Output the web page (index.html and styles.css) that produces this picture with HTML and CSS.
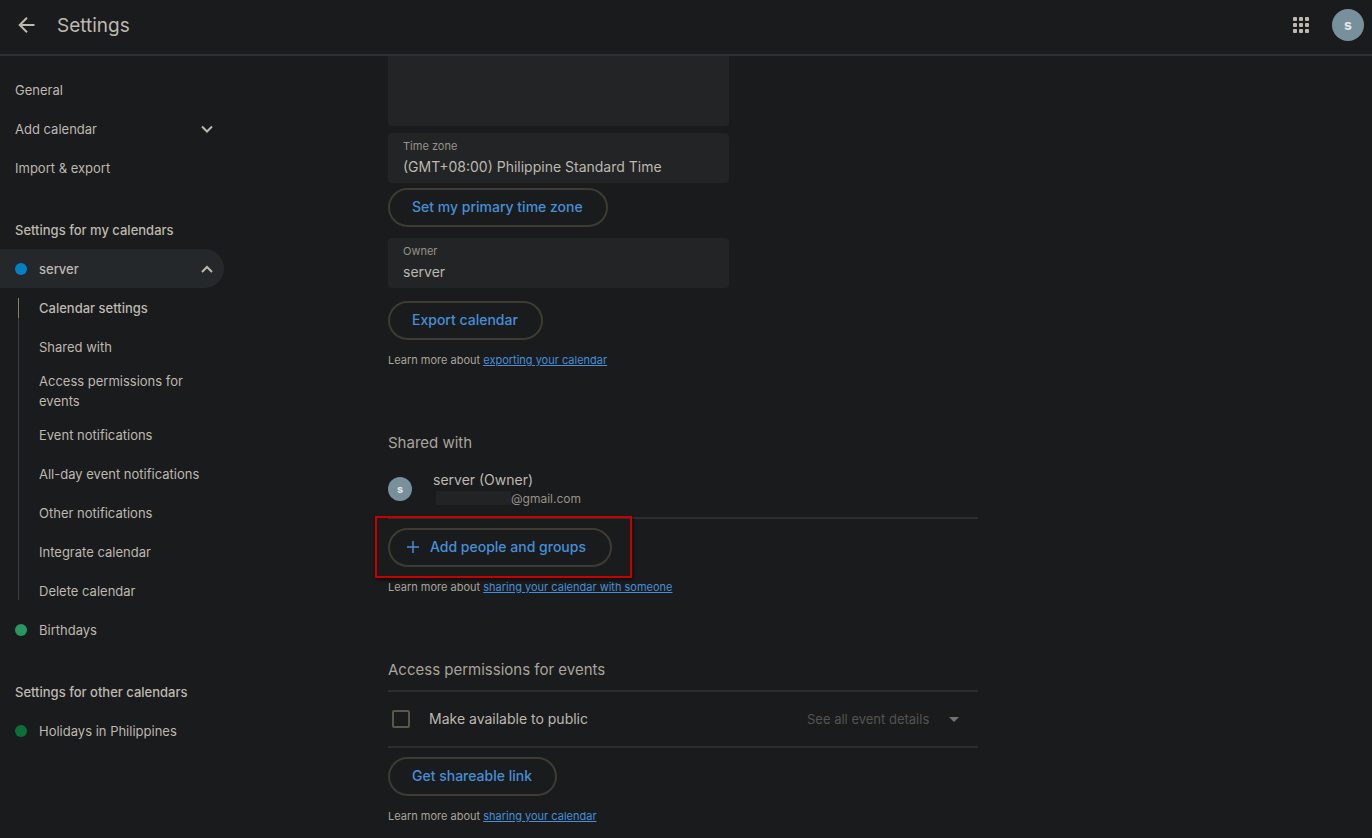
FILE: index.html
```html
<!DOCTYPE html>
<html lang="en">
<head>
    <meta charset="UTF-8">
    <meta name="viewport" content="width=device-width, initial-scale=1.0">
    <title>Settings</title>
    <link rel="stylesheet" href="styles.css">
</head>
<body>
    <header class="topbar">
        <button class="icon-btn" type="button" aria-label="Go back">
            <svg width="24" height="24" viewBox="0 0 24 24"><path d="M19.5 12H5M12 4.7L4.7 12l7.3 7.3" fill="none" stroke="currentColor" stroke-width="2"/></svg>
        </button>
        <h1>Settings</h1>
        <button class="icon-btn apps" type="button" aria-label="Apps">
            <svg width="24" height="24" viewBox="0 0 24 24" fill="currentColor">
                <rect x="4" y="4" width="4" height="4" rx="1"/><rect x="10" y="4" width="4" height="4" rx="1"/><rect x="16" y="4" width="4" height="4" rx="1"/>
                <rect x="4" y="10" width="4" height="4" rx="1"/><rect x="10" y="10" width="4" height="4" rx="1"/><rect x="16" y="10" width="4" height="4" rx="1"/>
                <rect x="4" y="16" width="4" height="4" rx="1"/><rect x="10" y="16" width="4" height="4" rx="1"/><rect x="16" y="16" width="4" height="4" rx="1"/>
            </svg>
        </button>
        <button class="avatar avatar-large" type="button" aria-label="Account">s</button>
    </header>

    <div class="layout">
        <nav class="sidebar">
            <a class="nav-item" href="#general">General</a>
            <button class="nav-item" type="button">
                <span>Add calendar</span>
                <svg class="chevron" width="12" height="12" viewBox="0 0 12 12"><path d="M1 3.5L6 8.500l5-5"/></svg>
            </button>
            <a class="nav-item" href="#import">Import &amp; export</a>

            <h2 class="nav-title">Settings for my calendars</h2>
            <button class="nav-item active" type="button">
                <span class="dot blue"></span>
                <span>server</span>
                <svg class="chevron" width="12" height="12" viewBox="0 0 12 12"><path d="M1 9l5-5 5 5"/></svg>
            </button>
            <div class="subnav">
                <a class="nav-item current" href="#settings">Calendar settings</a>
                <a class="nav-item" href="#shared">Shared with</a>
                <a class="nav-item" href="#access">Access permissions for events</a>
                <a class="nav-item" href="#event">Event notifications</a>
                <a class="nav-item" href="#allday">All-day event notifications</a>
                <a class="nav-item" href="#other">Other notifications</a>
                <a class="nav-item" href="#integrate">Integrate calendar</a>
                <a class="nav-item" href="#delete">Delete calendar</a>
            </div>
            <a class="nav-item" href="#birthdays"><span class="dot green"></span><span>Birthdays</span></a>

            <h2 class="nav-title">Settings for other calendars</h2>
            <a class="nav-item" href="#holidays"><span class="dot dark-green"></span><span>Holidays in Philippines</span></a>
        </nav>

        <main class="content">
            <section id="settings">
                <textarea class="description" aria-label="Description"></textarea>
                <div class="field">
                    <label for="timezone">Time zone</label>
                    <input id="timezone" type="text" value="(GMT+08:00) Philippine Standard Time" readonly>
                </div>
                <button class="pill-btn" type="button">Set my primary time zone</button>
                <div class="field owner">
                    <label for="owner">Owner</label>
                    <input id="owner" type="text" value="server" readonly>
                </div>
                <button class="pill-btn" type="button">Export calendar</button>
                <p class="learn">Learn more about <a href="#export-help">exporting your calendar</a></p>
            </section>

            <section id="shared">
                <h2>Shared with</h2>
                <div class="person">
                    <span class="avatar">s</span>
                    <div>
                        <div class="person-name">server (Owner)</div>
                        <div class="person-email"><span class="redacted"></span>@gmail.com</div>
                    </div>
                </div>
                <div class="highlight">
                    <button class="pill-btn add-btn" type="button">
                        <svg width="12" height="12" viewBox="0 0 12 12"><path d="M6 0v12M0 6h12" fill="none" stroke="currentColor" stroke-width="1.5"/></svg>
                        Add people and groups
                    </button>
                </div>
                <p class="learn">Learn more about <a href="#share-help">sharing your calendar with someone</a></p>
            </section>

            <section id="access">
                <h2>Access permissions for events</h2>
                <div class="permission">
                    <input id="public" type="checkbox">
                    <label for="public">Make available to public</label>
                    <div class="select-wrap">
                        <select aria-label="Event visibility" disabled>
                            <option>See all event details</option>
                        </select>
                        <svg width="10" height="5" viewBox="0 0 10 5"><path d="M0 0h10L5 5z" fill="currentColor"/></svg>
                    </div>
                </div>
                <button class="pill-btn" type="button">Get shareable link</button>
                <p class="learn">Learn more about <a href="#link-help">sharing your calendar</a></p>
            </section>
        </main>
    </div>
</body>
</html>
```
FILE: styles.css
```css
* {
    box-sizing: border-box;
}

body {
    margin: 0;
    min-height: 100vh;
    background-color: #1a1b1c;
    color: #bdb8b0;
    font-family: Inter, Roboto, sans-serif;
    font-size: 13px;
    line-height: 20px;
}

button, input, select, textarea {
    font: inherit;
    color: inherit;
}

button {
    cursor: pointer;
}

h1, h2, p {
    margin: 0;
}

/* top bar */
.topbar {
    display: flex;
    align-items: center;
    height: 56px;
    padding: 1px 8px 8px 15px;
    padding-bottom: 6px;
    border-bottom: 2px solid #2c3032;
}

.topbar h1 {
    margin-left: 18px;
    padding-top: 2px;
    font-size: 19px;
    font-weight: 400;
    line-height: 24px;
}

.icon-btn {
    display: flex;
    padding: 0;
    border: none;
    background: none;
}

.apps {
    margin-left: auto;
    margin-right: 19px;
}

.avatar {
    display: flex;
    flex-shrink: 0;
    align-items: center;
    justify-content: center;
    width: 24px;
    height: 24px;
    padding: 0;
    border: none;
    border-radius: 50%;
    background-color: #78909c;
    color: #e4e6e7;
    font-size: 11px;
    font-weight: 700;
}

.avatar-large {
    width: 32px;
    height: 32px;
    font-size: 14px;
}

.layout {
    display: flex;
    align-items: flex-start;
}

/* sidebar */
.sidebar {
    flex: 0 0 224px;
    margin-right: 164px;
    padding-top: 14px;
}

.nav-item {
    display: flex;
    align-items: center;
    width: 100%;
    min-height: 39px;
    padding: 5px 11px 4px 15px;
    border: none;
    background: none;
    color: inherit;
    text-align: left;
    text-decoration: none;
}

.nav-item.active {
    border-radius: 0 20px 20px 0;
    background-color: #24282b;
    font-weight: 500;
}

.nav-title {
    margin-top: 23px;
    padding: 10px 0 9px 15px;
    font-size: 13px;
    font-weight: 500;
}

.chevron {
    margin-left: auto;
    fill: none;
    stroke: currentColor;
    stroke-width: 2;
}

.dot {
    width: 12px;
    height: 12px;
    margin-right: 12px;
    border-radius: 50%;
}

.blue {
    background-color: #0381c2;
}

.green {
    background-color: #2a9763;
}

.dark-green {
    background-color: #0b7038;
}

.subnav {
    position: relative;
}

.subnav .nav-item {
    padding-left: 39px;
}

.subnav .current {
    font-weight: 500;
}

.subnav::before,
.current::before {
    content: "";
    position: absolute;
    left: 18px;
    top: 10px;
    bottom: 10px;
    width: 1px;
    background-color: #383c3e;
}

.subnav .current::before {
    bottom: auto;
    height: 20px;
    background-color: #8b8069;
}

/* content */
.content {
    flex: 0 1 590px;
}

.content h2 {
    margin-top: 61px;
    color: #a9a49b;
    font-size: 15px;
    font-weight: 400;
    line-height: 24px;
}

.description {
    display: block;
    width: 341px;
    height: 70px;
    border: none;
    border-radius: 0 0 4px 4px;
    background-color: #222425;
    resize: none;
}

.field {
    width: 341px;
    height: 50px;
    margin: 7px 0 5px;
    padding: 4px 15px;
    border-radius: 4px;
    background-color: #222425;
}

.field label {
    display: block;
    color: #98928a;
    font-size: 11px;
    line-height: 18px;
}

.field input {
    display: block;
    width: 100%;
    height: 22px;
    padding: 0;
    border: none;
    background: none;
    font-size: 14px;
}

.owner {
    margin: 11px 0 13px;
}

.pill-btn {
    display: flex;
    align-items: center;
    height: 39px;
    padding: 0 23px 2px 22px;
    border: 2px solid #3f3b34;
    border-radius: 20px;
    background: none;
    color: #468fd8;
    font-size: 14px;
    font-weight: 500;
}

.learn {
    margin-top: 10px;
    color: #a9a49b;
    font-size: 11px;
}

.learn a {
    color: #468fd8;
}

.person {
    display: flex;
    align-items: center;
    gap: 21px;
    padding: 15px 0 9px;
    border-bottom: 2px solid #2c2f30;
}

.person-name {
    font-size: 14px;
}

.person-email {
    display: flex;
    color: #98928a;
    font-size: 12px;
    line-height: 18px;
}

.redacted {
    width: 75px;
    height: 14px;
    margin: 1px 0 0 3px;
    background-color: #222324;
}

.highlight {
    position: relative;
    width: fit-content;
    margin-top: 9px;
}

/* red frame drawn over the divider */
.highlight::after {
    content: "";
    position: absolute;
    inset: -12px -20px -11px -13px;
    border: 2px solid #c80000;
    box-shadow: 1px 2px 3px #0d0d0d;
    pointer-events: none;
}

.add-btn {
    gap: 11px;
    padding: 0 24px 2px 17px;
}

.permission {
    display: flex;
    align-items: center;
    height: 58px;
    margin: 8px 0 9px;
    padding: 0 19px 0 4px;
    border-top: 2px solid #2c2f30;
    border-bottom: 2px solid #2c2f30;
}

.permission label {
    font-size: 14px;
}

.permission input {
    appearance: none;
    width: 18px;
    height: 18px;
    margin: 0 19px 0 0;
    border: 2px solid #5b554b;
    border-radius: 2px;
}

.select-wrap {
    display: flex;
    align-items: center;
    gap: 19px;
    margin-left: auto;
}

.select-wrap select {
    appearance: none;
    padding: 0;
    border: none;
    background: none;
    color: #55534f;
    opacity: 1;
}

.select-wrap svg {
    color: #76726c;
}
```
